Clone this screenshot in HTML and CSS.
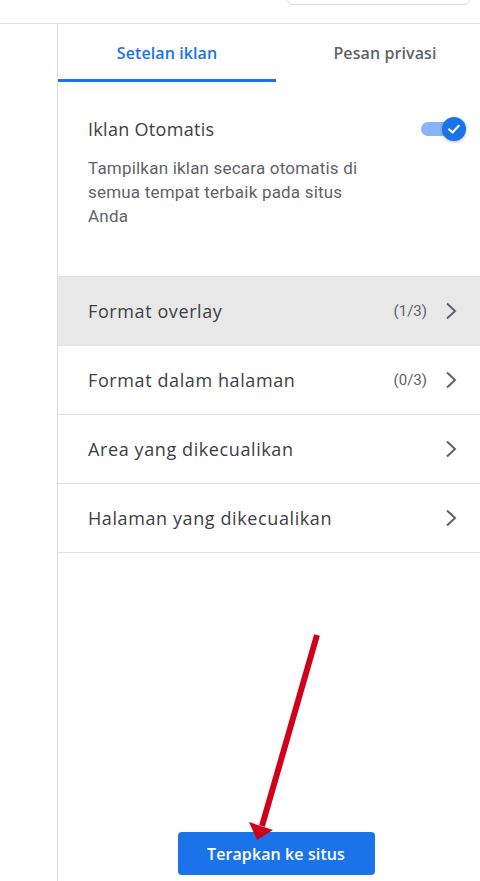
FILE: index.html
```html
<!DOCTYPE html>
<html lang="id">
<head>
<meta charset="utf-8">
<title>Iklan Otomatis</title>
<link rel="stylesheet" href="styles.css">
</head>
<body>
  <header class="topbar">
    <div class="search-box"></div>
  </header>
  <div class="main">
    <aside class="sidebar"></aside>
    <section class="panel">
      <nav class="tabs">
        <div class="tab active">Setelan iklan</div>
        <div class="tab">Pesan privasi</div>
      </nav>
      <div class="auto-ads">
        <div class="auto-head">
          <span class="auto-title">Iklan Otomatis</span>
          <span class="toggle">
            <span class="track"></span>
            <span class="thumb">
              <svg width="14" height="14" viewBox="0 0 14 14"><polyline points="2.2,7.4 5.5,10.5 11.8,3.8" fill="none" stroke="#fff" stroke-width="2" stroke-linecap="round" stroke-linejoin="round"/></svg>
            </span>
          </span>
        </div>
        <p class="desc">Tampilkan iklan secara otomatis di semua tempat terbaik pada situs Anda</p>
      </div>
      <ul class="list">
        <li class="row active"><span class="row-title">Format overlay</span><span class="count">(1/3)</span><svg class="chev" width="12" height="18" viewBox="0 0 12 18"><polyline points="2,1.5 10,9 2,16.5" fill="none" stroke="#5f6368" stroke-width="2"/></svg></li>
        <li class="row"><span class="row-title">Format dalam halaman</span><span class="count">(0/3)</span><svg class="chev" width="12" height="18" viewBox="0 0 12 18"><polyline points="2,1.5 10,9 2,16.5" fill="none" stroke="#5f6368" stroke-width="2"/></svg></li>
        <li class="row"><span class="row-title">Area yang dikecualikan</span><svg class="chev" width="12" height="18" viewBox="0 0 12 18"><polyline points="2,1.5 10,9 2,16.5" fill="none" stroke="#5f6368" stroke-width="2"/></svg></li>
        <li class="row"><span class="row-title">Halaman yang dikecualikan</span><svg class="chev" width="12" height="18" viewBox="0 0 12 18"><polyline points="2,1.5 10,9 2,16.5" fill="none" stroke="#5f6368" stroke-width="2"/></svg></li>
      </ul>
      <div class="footer">
        <button class="apply">Terapkan ke situs</button>
      </div>
    </section>
  </div>
  <svg class="arrow" width="480" height="881" viewBox="0 0 480 881">
    <line x1="317" y1="635" x2="262" y2="826" stroke="#d0021b" stroke-width="6"/>
    <polygon points="249,822 273,830 257,840" fill="#d0021b"/>
  </svg>
</body>
</html>
```

FILE: styles.css
```css
html, body {
  margin: 0;
  padding: 0;
  width: 480px;
  height: 881px;
  overflow: hidden;
  background: #fff;
}

body {
  font-family: Roboto, "Liberation Sans", sans-serif;
  position: relative;
}

.topbar {
  height: 23px;
  border-bottom: 1px solid #e0e0e0;
  overflow: hidden;
}

.search-box {
  box-sizing: border-box;
  margin: -31px 0 0 287px;
  width: 183px;
  height: 36px;
  border: 1px solid #dadce0;
  border-radius: 6px;
}

.main {
  display: flex;
  height: 857px;
}

.sidebar {
  flex: none;
  width: 57px;
  border-right: 1px solid #e0e0e0;
}

.panel {
  flex: none;
  width: 436px;
  display: flex;
  flex-direction: column;
}

.tabs {
  display: flex;
  height: 58px;
}

.tab {
  flex: 1;
  display: flex;
  align-items: center;
  justify-content: center;
  font-family: "Open Sans", Roboto, sans-serif;
  font-size: 16px;
  font-weight: 600;
  letter-spacing: 0.1px;
  color: #5f6368;
}

.tab.active {
  color: #1a73e8;
  box-shadow: inset 0 -3px 0 #1a73e8;
}

.auto-ads {
  padding: 35px 28px 48px 30px;
}

.auto-head {
  display: flex;
  align-items: center;
  justify-content: space-between;
  height: 24px;
}

.auto-title {
  font-family: "Open Sans", Roboto, sans-serif;
  font-size: 18px;
  letter-spacing: 0.3px;
  color: #3c4043;
}

.toggle {
  position: relative;
  width: 45px;
  height: 24px;
}

.track {
  position: absolute;
  left: 0;
  top: 5px;
  width: 34px;
  height: 14px;
  border-radius: 7px;
  background: #8ab4f8;
}

.thumb {
  position: absolute;
  right: 0;
  top: 0;
  width: 24px;
  height: 24px;
  border-radius: 50%;
  background: #1a73e8;
  box-shadow: 0 1px 3px rgba(0, 0, 0, 0.3);
  display: flex;
  align-items: center;
  justify-content: center;
}

.desc {
  margin: 15px 0 0;
  max-width: 285px;
  font-size: 17px;
  letter-spacing: 0.2px;
  line-height: 24px;
  color: #5f6368;
}

.list {
  list-style: none;
  margin: 0;
  padding: 0;
  border-top: 1px solid #e0e0e0;
}

.row {
  height: 68px;
  display: flex;
  align-items: center;
  padding: 0 37px 0 30px;
  border-bottom: 1px solid #e0e0e0;
}

.row.active {
  background: #e8e8e8;
}

.row-title {
  flex: 1;
  font-family: "Open Sans", Roboto, sans-serif;
  font-size: 18px;
  letter-spacing: 0.6px;
  color: #3c4043;
}

.count {
  margin-right: 18px;
  font-size: 15px;
  color: #5f6368;
}

.chev {
  flex: none;
}

.footer {
  margin-top: auto;
  display: flex;
  justify-content: center;
  padding-bottom: 6px;
}

.apply {
  width: 197px;
  height: 43px;
  border: 0;
  border-radius: 4px;
  background: #1a73e8;
  color: #fff;
  font-family: "Open Sans", Roboto, sans-serif;
  font-size: 16px;
  font-weight: 600;
  letter-spacing: 0.1px;
}

.arrow {
  position: absolute;
  left: 0;
  top: 0;
  pointer-events: none;
}
```
